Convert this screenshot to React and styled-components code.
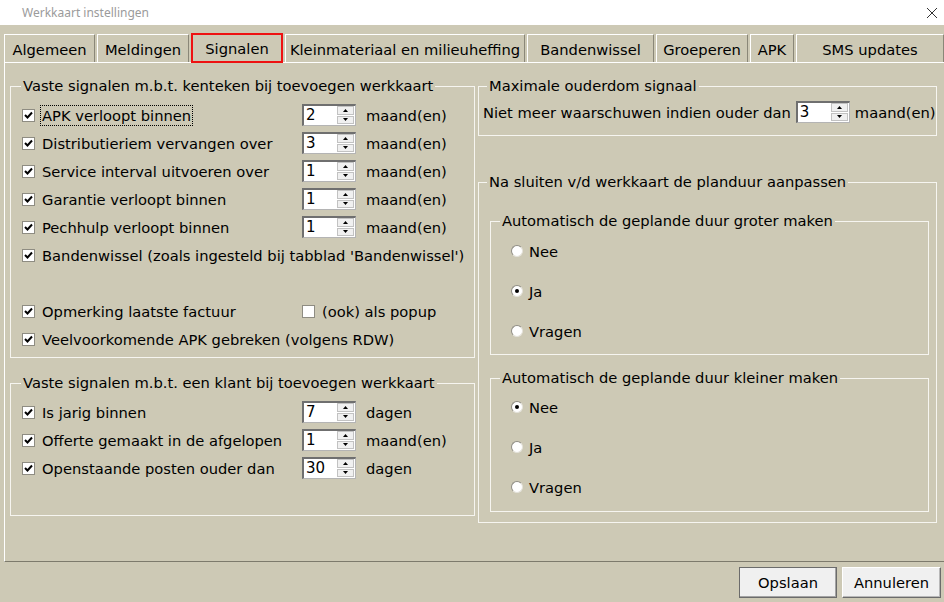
import React from "react";
import styled, { createGlobalStyle } from "styled-components";

const GlobalStyle = createGlobalStyle`
  html, body {
    margin: 0;
    padding: 0;
    background: #cdc9b5;
  }
  body {
    font-family: "DejaVu Sans", Verdana, sans-serif;
    font-size: 14.7px;
    color: #000;
  }
`;

const Window = styled.div`
  width: 944px;
  height: 602px;
  display: flex;
  flex-direction: column;
  overflow: hidden;
  background: #cdc9b5;
`;

const TitleBar = styled.div`
  height: 25px;
  flex: none;
  background: #fff;
  display: flex;
  align-items: center;
  justify-content: space-between;
  padding: 0 6px 0 22px;
  font-family: "Noto Sans", "Open Sans", sans-serif;
  font-size: 12px;
  color: #9b9b9b;
`;

const TabStrip = styled.div`
  display: flex;
  gap: 2px;
  padding: 9px 0 0 4px;
  height: 28px;
  flex: none;
`;

const Tab = styled.div`
  box-sizing: border-box;
  width: ${(p) => p.$w}px;
  height: ${(p) => (p.$active ? 30 : 28)}px;
  margin-top: ${(p) => (p.$active ? -1 : 0)}px;
  display: flex;
  align-items: center;
  justify-content: center;
  padding-top: ${(p) => (p.$active ? 0 : 2)}px;
  white-space: nowrap;
  border-top: 1px solid #fff;
  border-left: 1px solid #fff;
  border-right: 1px solid #8a8778;
  ${(p) => p.$active && "border: 2px solid #ee1111; position: relative; z-index: 1;"}
`;

const Panel = styled.div`
  box-sizing: border-box;
  margin-left: 4px;
  height: 500px;
  flex: none;
  border-top: 1px solid #fff;
  border-left: 1px solid #fff;
  border-bottom: 1px solid #7d7a6c;
  padding: 14px 0 0 5px;
  display: grid;
  grid-template-columns: 465px 459px;
  column-gap: 3px;
  align-items: start;
`;

const Column = styled.div`
  display: flex;
  flex-direction: column;
  gap: ${(p) => p.$gap}px;
`;

const GroupBox = styled.fieldset`
  box-sizing: border-box;
  margin: 0;
  min-width: 0;
  height: ${(p) => p.$h}px;
  padding: ${(p) => p.$pt}px ${(p) => p.$pr || 0}px 0 ${(p) => p.$pl}px;
  border: 1px solid #f6f5f0;
`;

const Legend = styled.legend`
  padding: 0 2px;
  margin-left: ${(p) => p.$m}px;
  line-height: 18px;
  white-space: nowrap;
`;

const Row = styled.div`
  display: grid;
  grid-template-columns: 270px 54px auto;
  column-gap: 10px;
  align-items: center;
  height: 28px;
  white-space: nowrap;
`;

const Spacer = styled.div`
  height: ${(p) => p.$h}px;
`;

const CheckLabel = styled.label`
  display: flex;
  align-items: center;
  gap: 7px;
  white-space: nowrap;
  grid-column: ${(p) => p.$span || "auto"};
`;

const Box = styled.span`
  box-sizing: border-box;
  width: 13px;
  height: 13px;
  flex: none;
  background: #fff;
  border: 1px solid #8e8c82;
  display: flex;
  align-items: center;
  justify-content: center;
`;

const Focus = styled.span`
  outline: 1px dotted #000;
  outline-offset: 1px;
`;

const SpinBox = styled.div`
  box-sizing: border-box;
  width: 54px;
  height: 22px;
  display: flex;
  background: #fff;
  border: 1px solid #b4b4b4;
  border-top: 2px solid #6f6f6f;
  border-left: 2px solid #6f6f6f;
`;

const SpinValue = styled.span`
  flex: 1;
  padding-left: 2px;
  line-height: 19px;
  font-size: 15px;
`;

const SpinButtons = styled.div`
  width: 17px;
  display: flex;
  flex-direction: column;
  gap: 1px;
  padding: 0 1px 1px 0;
`;

const SpinButton = styled.div`
  flex: 1;
  background: #f0f0f0;
  border: 1px solid #c2c2c2;
  display: flex;
  align-items: center;
  justify-content: center;
`;

const Unit = styled.span`
  white-space: nowrap;
`;

const InlineRow = styled.div`
  display: flex;
  align-items: center;
  gap: 5px;
  height: 28px;
  white-space: nowrap;
`;

const RadioRow = styled.label`
  display: flex;
  align-items: center;
  gap: 6px;
  height: 40px;
`;

const RadioDot = styled.span`
  box-sizing: border-box;
  width: 12px;
  height: 12px;
  flex: none;
  border-radius: 50%;
  background: #fff;
  border: 1px solid #8f8d84;
  border-right-color: #e4e2da;
  border-bottom-color: #e4e2da;
  display: flex;
  align-items: center;
  justify-content: center;
  &::after {
    content: "";
    width: 4px;
    height: 4px;
    border-radius: 50%;
    background: ${(p) => (p.$on ? "#000" : "transparent")};
  }
`;

const Footer = styled.div`
  display: flex;
  justify-content: flex-end;
  gap: 5px;
  padding: 5px 3px 0 0;
`;

const Button = styled.button`
  box-sizing: border-box;
  width: ${(p) => p.$w}px;
  height: 31px;
  font-family: inherit;
  font-size: 14.7px;
  color: #000;
  background: #f0f0f0;
  border: 1px solid ${(p) => (p.$default ? "#6b6b6b" : "#fff")};
  border-right-color: #6b6b6b;
  border-bottom-color: #6b6b6b;
  box-shadow: ${(p) => (p.$default ? "inset -1px -1px 0 #a3a3a3" : "inset -1px -1px 0 #b8b8b8")};
  padding: 0;
`;

const Check = () => (
  <svg width="9" height="9" viewBox="0 0 9 9">
    <path d="M1 4 L3.5 6.5 L8 1.5" fill="none" stroke="#000" strokeWidth="2" />
  </svg>
);

const Checkbox = ({ checked = true }) => <Box>{checked && <Check />}</Box>;

const Arrow = ({ up }) => (
  <svg width="5" height="3" viewBox="0 0 5 3">
    <path d={up ? "M2.5 0 L5 3 L0 3 Z" : "M0 0 L5 0 L2.5 3 Z"} fill="#000" />
  </svg>
);

const Spin = ({ value }) => (
  <SpinBox>
    <SpinValue>{value}</SpinValue>
    <SpinButtons>
      <SpinButton>
        <Arrow up />
      </SpinButton>
      <SpinButton>
        <Arrow />
      </SpinButton>
    </SpinButtons>
  </SpinBox>
);

const tabs = [
  ["Algemeen", 91],
  ["Meldingen", 92],
  ["Signalen", 92],
  ["Kleinmateriaal en milieuheffing", 240],
  ["Bandenwissel", 127],
  ["Groeperen", 92],
  ["APK", 44],
  ["SMS updates", 148],
];

const kentekenRows = [
  ["APK verloopt binnen", "2", "maand(en)", true],
  ["Distributieriem vervangen over", "3", "maand(en)"],
  ["Service interval uitvoeren over", "1", "maand(en)"],
  ["Garantie verloopt binnen", "1", "maand(en)"],
  ["Pechhulp verloopt binnen", "1", "maand(en)"],
];

const klantRows = [
  ["Is jarig binnen", "7", "dagen"],
  ["Offerte gemaakt in de afgelopen", "1", "maand(en)"],
  ["Openstaande posten ouder dan", "30", "dagen"],
];

const SignalRow = ({ label, value, unit, focus }) => (
  <Row>
    <CheckLabel>
      <Checkbox />
      {focus ? <Focus>{label}</Focus> : <span>{label}</span>}
    </CheckLabel>
    <Spin value={value} />
    <Unit>{unit}</Unit>
  </Row>
);

const RadioGroup = ({ title, selected, h, pt }) => (
  <GroupBox $h={h} $pt={pt} $pl={20} $pr={6}>
    <Legend $m={-11}>{title}</Legend>
    {["Nee", "Ja", "Vragen"].map((o) => (
      <RadioRow key={o}>
        <RadioDot $on={o === selected} />
        {o}
      </RadioRow>
    ))}
  </GroupBox>
);

export default function App() {
  return (
    <Window>
      <GlobalStyle />
      <TitleBar>
        Werkkaart instellingen
        <svg width="12" height="12" viewBox="0 0 12 12">
          <path d="M1 1 L11 11 M11 1 L1 11" stroke="#333" strokeWidth="1" />
        </svg>
      </TitleBar>
      <TabStrip>
        {tabs.map(([t, w]) => (
          <Tab key={t} $w={w} $active={t === "Signalen"}>
            {t}
          </Tab>
        ))}
      </TabStrip>
      <Panel>
        <Column $gap={16}>
          <GroupBox $h={281} $pt={6} $pl={11}>
            <Legend $m={-1}>Vaste signalen m.b.t. kenteken bij toevoegen werkkaart</Legend>
            {kentekenRows.map(([l, v, u, f]) => (
              <SignalRow key={l} label={l} value={v} unit={u} focus={f} />
            ))}
            <Row>
              <CheckLabel $span="1 / -1">
                <Checkbox />
                Bandenwissel (zoals ingesteld bij tabblad 'Bandenwissel')
              </CheckLabel>
            </Row>
            <Spacer $h={28} />
            <Row>
              <CheckLabel>
                <Checkbox />
                Opmerking laatste factuur
              </CheckLabel>
              <CheckLabel $span="2 / 4">
                <Checkbox checked={false} />
                (ook) als popup
              </CheckLabel>
            </Row>
            <Row>
              <CheckLabel $span="1 / -1">
                <Checkbox />
                Veelvoorkomende APK gebreken (volgens RDW)
              </CheckLabel>
            </Row>
          </GroupBox>
          <GroupBox $h={142} $pt={6} $pl={11}>
            <Legend $m={-1}>Vaste signalen m.b.t. een klant bij toevoegen werkkaart</Legend>
            {klantRows.map(([l, v, u]) => (
              <SignalRow key={l} label={l} value={v} unit={u} />
            ))}
          </GroupBox>
        </Column>
        <Column $gap={37}>
          <GroupBox $h={59} $pt={3} $pl={4}>
            <Legend $m={4}>Maximale ouderdom signaal</Legend>
            <InlineRow>
              Niet meer waarschuwen indien ouder dan
              <Spin value="3" />
              <Unit>maand(en)</Unit>
            </InlineRow>
          </GroupBox>
          <GroupBox $h={350} $pt={21} $pl={11} $pr={7}>
            <Legend $m={-3}>Na sluiten v/d werkkaart de planduur aanpassen</Legend>
            <Column $gap={14}>
              <RadioGroup title="Automatisch de geplande duur groter maken" selected="Ja" h={143} pt={1} />
              <RadioGroup title="Automatisch de geplande duur kleiner maken" selected="Nee" h={143} pt={0} />
            </Column>
          </GroupBox>
        </Column>
      </Panel>
      <Footer>
        <Button $w={98} $default>
          Opslaan
        </Button>
        <Button $w={99}>Annuleren</Button>
      </Footer>
    </Window>
  );
}
